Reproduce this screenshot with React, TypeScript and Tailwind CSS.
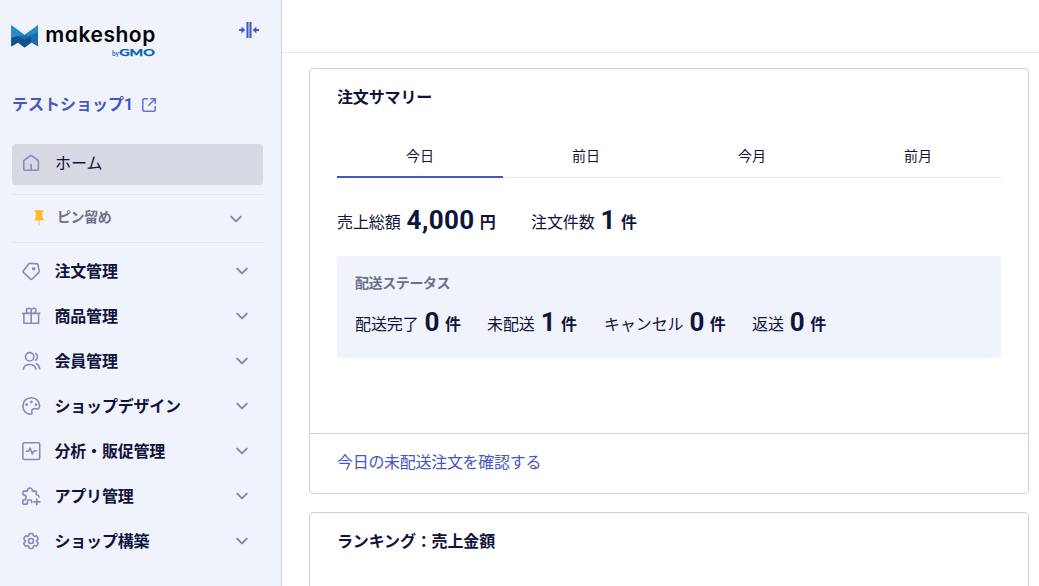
import type { ReactNode } from "react";
import { HiOutlineCog6Tooth } from "react-icons/hi2";

function Logo() {
  return (
    <svg width="156" height="44" viewBox="0 0 156 44" className="block overflow-visible">
      <path d="M0.3 1.3L13.5 11L27 1.3V22.5L20.5 18.5L13.5 23.5L7 18.5L0.3 22.5Z" fill="#1a6eb0" />
      <path d="M0.3 1.3L13.5 11L8 12.3L0.3 13.8Z" fill="#2489cf" />
      <path d="M27 1.3L13.5 11L18 12L27 8Z" fill="#2489cf" />
      <path d="M0.3 13.8L7 12.2L13.5 15.5L20 12.8L20.5 18.5L13.5 23.5L7 18.5L0.3 22.5Z" fill="#11518c" />
      <text x="34.3" y="18.3" textLength="110" lengthAdjust="spacing" fontFamily="Inter, sans-serif" fontWeight="600" fontSize="21" fill="#050505" className="[font-feature-settings:'cv11']">makeshop</text>
      <text x="101" y="32.2" textLength="7" lengthAdjust="spacingAndGlyphs" fontFamily="Lato, sans-serif" fontWeight="700" fontSize="7" fill="#1a72b8">by</text>
      <text x="108.2" y="32.2" textLength="35.6" lengthAdjust="spacingAndGlyphs" fontFamily="Lato, sans-serif" fontWeight="700" fontSize="9.5" fill="#0062b0" stroke="#0062b0" strokeWidth="0.25">GMO</text>
    </svg>
  );
}

function Icon({ children, className = "" }: { children: ReactNode; className?: string }) {
  return (
    <svg width="20" height="20" viewBox="0 0 20 20" fill="none" stroke="#858abb" strokeWidth="1.6" strokeLinecap="round" strokeLinejoin="round" className={`block shrink-0 ${className}`}>
      {children}
    </svg>
  );
}

function Chevron({ className = "" }: { className?: string }) {
  return (
    <svg width="14" height="14" viewBox="0 0 14 14" fill="none" stroke="#7f84b6" strokeWidth="1.9" strokeLinecap="round" strokeLinejoin="round" className={`ml-auto block ${className}`}>
      <path d="M2.2 4.6L7 9.4L11.8 4.6" />
    </svg>
  );
}

const menu: { label: string; icon: ReactNode }[] = [
  {
    label: "注文管理",
    icon: (
      <Icon>
        <path d="M2.2 9.9L7.8 2.8Q8.3 2.2 9.1 2.2L15.9 2.9Q16.8 3 17 3.8L18.2 10.3Q18.3 11 17.7 11.6L11.1 18Q10.3 18.8 9.5 18L2.4 11.4Q1.7 10.6 2.2 9.9Z" />
        <circle cx="12.7" cy="7.7" r="1" fill="#858abb" />
      </Icon>
    ),
  },
  {
    label: "商品管理",
    icon: (
      <Icon>
        <path d="M1.7 7.4H18.7M2.9 7.4V17.3H17.6V7.4M10.2 7.4V17.3" />
        <path d="M10.2 7.2V4.6A2.4 2.4 0 1 0 6 6.2Q6.5 7.2 7.5 7.3M10.2 7.2V4.6A2.4 2.4 0 1 1 14.4 6.2Q13.9 7.2 12.9 7.3" />
      </Icon>
    ),
  },
  {
    label: "会員管理",
    icon: (
      <Icon>
        <circle cx="8.7" cy="5.8" r="4.2" />
        <path d="M2.3 18.1A6.4 5.6 0 0 1 14.9 18.1M14.8 2.4A4.3 4.3 0 0 1 14.8 9.2M15.4 12.8Q18.4 14.2 18.7 18" />
      </Icon>
    ),
  },
  {
    label: "ショップデザイン",
    icon: (
      <Icon>
        <path d="M10.3 1.8C5.4 1.8 1.9 5.4 1.9 10C1.9 14.8 5.4 18.3 9.5 18.3C11 18.3 11.3 17.2 10.9 16.1C10.3 14.3 11.4 12.6 13.4 12.7L16.1 12.9C17.7 13 18.5 11.8 18.6 10C18.7 5.2 15 1.8 10.3 1.8Z" />
        <g fill="#858abb" strokeWidth="0.6">
          <circle cx="5.6" cy="8.6" r="1.1" />
          <circle cx="10.3" cy="6" r="1.1" />
          <circle cx="14.9" cy="8.6" r="1.1" />
        </g>
      </Icon>
    ),
  },
  {
    label: "分析・販促管理",
    icon: (
      <Icon>
        <rect x="1.9" y="1.7" width="16.8" height="16.8" rx="1.6" />
        <path d="M5.3 10.2H7.6L9.2 7L11.3 13L12.9 9.8H15.3" />
      </Icon>
    ),
  },
  {
    label: "アプリ管理",
    icon: (
      <Icon>
        <path d="M10.7 16.4V16A2.2 2.2 0 0 0 6.3 16V17.5Q6.3 18.1 5.7 18.1H2.6Q2 18.1 2 17.5V14.4Q2 13.9 2.6 13.9A2.2 2.2 0 0 0 2.6 8.9Q2 8.8 2 8.2V5.8Q2 5.1 2.7 5.1H5.8Q6.5 5.1 6.5 4.4A2.4 2.4 0 0 1 11.3 4.4Q11.3 5.1 12 5.1H14.5Q15.2 5.1 15.2 5.8V8.1Q15.2 8.7 15.8 8.8Q17.9 9.2 18.1 11M15.8 13V18.8M12.9 15.9H18.8" />
      </Icon>
    ),
  },
  {
    label: "ショップ構築",
    icon: <HiOutlineCog6Tooth size={20} color="#858abb" strokeWidth={1.9} className="block shrink-0" />,
  },
];

function Sidebar() {
  return (
    <aside className="flex w-[282px] shrink-0 flex-col border-r border-[#c9cee0] bg-[#f0f3fc] px-3">
      <div className="flex h-[94px] items-start justify-between">
        <div className="-ml-px pt-[24px]">
          <Logo />
        </div>
        <svg width="22" height="18" viewBox="0 0 22 18" className="mt-[21px] mr-[9px] block" fill="#4656c3">
          <path opacity="0.55" d="M8 1H14V17H8Z" />
          <path d="M9 1H10V17H9ZM12 1H13V17H12ZM1 8H3.5V5.6L7.2 9L3.5 12.4V10H1ZM21 8H18.3V5.6L14.6 9L18.3 12.4V10H21Z" />
        </svg>
      </div>
      <div className="flex h-5 items-center text-[16px] leading-5 font-bold text-[#4656c3]">
        <span className="mt-px w-[121px] whitespace-nowrap">テストショップ1</span>
        <svg width="16" height="16" viewBox="0 0 16 16" fill="none" stroke="#6572cf" strokeWidth="1.5" className="mt-px ml-2 block">
          <path d="M7 1.8H3Q1.8 1.8 1.8 3V13Q1.8 14.2 3 14.2H13Q14.2 14.2 14.2 13V9M9.3 1.8H14.2V6.7M14.2 1.8L7.3 8.7" />
        </svg>
      </div>
      <div className="mt-[30px] flex h-[41px] w-[251px] items-center rounded-[4px] bg-[#d6d9e4] pl-[9px] text-[16px] text-[#10143b]">
        <Icon className="-mt-[3px]">
          <path d="M2.8 8.2Q2.8 7.6 3.3 7.2L9.3 2.9Q10.1 2.3 10.9 2.9L16.9 7.2Q17.4 7.6 17.4 8.2V16.2Q17.4 17.2 16.4 17.2H3.8Q2.8 17.2 2.8 16.2ZM10.1 11.5V17" />
        </Icon>
        <span className="-mt-px ml-[14px]">ホーム</span>
      </div>
      <div className="mt-[9px] flex h-[49px] w-[253px] items-center border-y border-[#e2e5f0] pr-[22px] text-[14px] font-bold text-[#6c7088]">
        <svg width="10" height="16" viewBox="0 0 10 16" fill="#ffb72d" className="-mt-px ml-[22px] block">
          <path d="M0.7 0.3H9.3V2H8.2V7.2Q9.7 8.5 9.7 10.3H5.5V15.5H4.5V10.3H0.3Q0.3 8.5 1.8 7.2V2H0.7Z" />
        </svg>
        <span className="-mt-[3px] ml-[13px] tracking-[-0.4px]">ピン留め</span>
        <Chevron />
      </div>
      <nav className="mt-[5px]">
        {menu.map((item) => (
          <div key={item.label} className="flex h-[45px] items-center pr-[20px] pl-[9px] text-[16px] font-bold text-[#10143b]">
            {item.icon}
            <span className="mt-[2px] ml-[13.5px] tracking-[-0.2px] whitespace-nowrap">{item.label}</span>
            <Chevron />
          </div>
        ))}
      </nav>
    </aside>
  );
}

function Stat({ label, value, unit, className }: { label: string; value: string; unit: string; className: string }) {
  return (
    <div className={`flex h-8 items-baseline text-[16px] leading-8 whitespace-nowrap ${className}`}>
      <span className="tracking-[-0.1px]">{label}</span>
      <span className="ml-[6px] translate-y-px text-[26px] font-bold tracking-[0.4px]">{value}</span>
      <span className="ml-[5px] font-bold">{unit}</span>
    </div>
  );
}

export default function App() {
  return (
    <div className="flex h-[586px] w-[1039px] overflow-hidden bg-white font-[Roboto,'Noto_Sans_CJK_JP',sans-serif] text-[#10143b]">
      <Sidebar />
      <div className="flex min-w-0 flex-1 flex-col">
        <header className="h-[53px] shrink-0 border-b border-[#e6e8f0]" />
        <main className="flex flex-col gap-[18px] pt-[15px] pr-[10px] pl-[27px]">
          <section className="flex h-[426px] shrink-0 flex-col rounded-[4px] border border-[#c9cee0]">
            <div className="h-[364px] px-[27px] pt-[17px]">
              <h2 className="text-[16px] leading-6 font-bold tracking-[-0.15px]">注文サマリー</h2>
              <div className="mt-[27px] grid h-[41px] grid-cols-4 border-b border-[#e6e8f0] text-center text-[14px] leading-[39px]">
                <div className="h-[41px] border-b-2 border-[#4656c3]">今日</div>
                <div>前日</div>
                <div>今月</div>
                <div>前月</div>
              </div>
              <div className="mt-[25px] flex">
                <Stat label="売上総額" value="4,000" unit="円" className="w-[194px]" />
                <Stat label="注文件数" value="1" unit="件" className="" />
              </div>
              <div className="mt-[21px] h-[102px] rounded-[4px] bg-[#f0f3fc] px-[18px] pt-[17px]">
                <h3 className="text-[14px] leading-5 font-bold tracking-[-0.4px] text-[#6c7088]">配送ステータス</h3>
                <div className="mt-[12px] flex">
                  <Stat label="配送完了" value="0" unit="件" className="w-[132px]" />
                  <Stat label="未配送" value="1" unit="件" className="w-[117px]" />
                  <Stat label="キャンセル" value="0" unit="件" className="w-[148px]" />
                  <Stat label="返送" value="0" unit="件" className="" />
                </div>
              </div>
            </div>
            <div className="flex flex-1 items-center border-t border-[#c9cee0] px-[27px] pb-[1px] text-[16px] text-[#4656c3]">
              <a className="tracking-[-0.3px]">今日の未配送注文を確認する</a>
            </div>
          </section>
          <section className="h-[120px] shrink-0 rounded-[4px] border border-[#c9cee0] px-[27px] pt-[17px]">
            <h2 className="text-[16px] leading-6 font-bold tracking-[-0.15px]">ランキング：売上金額</h2>
          </section>
        </main>
      </div>
    </div>
  );
}
